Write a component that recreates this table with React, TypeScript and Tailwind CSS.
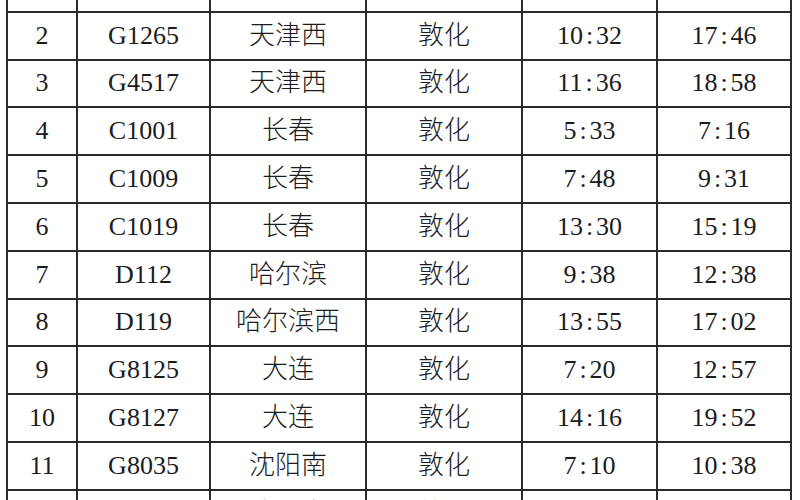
type Row = {
  no: string;
  train: string;
  from: string;
  to: string;
  depart: string;
  arrive: string;
};

const rows: Row[] = [
  { no: "1", train: "G1249", from: "北京朝阳", to: "敦化", depart: "8:05", arrive: "17:10" },
  { no: "2", train: "G1265", from: "天津西", to: "敦化", depart: "10:32", arrive: "17:46" },
  { no: "3", train: "G4517", from: "天津西", to: "敦化", depart: "11:36", arrive: "18:58" },
  { no: "4", train: "C1001", from: "长春", to: "敦化", depart: "5:33", arrive: "7:16" },
  { no: "5", train: "C1009", from: "长春", to: "敦化", depart: "7:48", arrive: "9:31" },
  { no: "6", train: "C1019", from: "长春", to: "敦化", depart: "13:30", arrive: "15:19" },
  { no: "7", train: "D112", from: "哈尔滨", to: "敦化", depart: "9:38", arrive: "12:38" },
  { no: "8", train: "D119", from: "哈尔滨西", to: "敦化", depart: "13:55", arrive: "17:02" },
  { no: "9", train: "G8125", from: "大连", to: "敦化", depart: "7:20", arrive: "12:57" },
  { no: "10", train: "G8127", from: "大连", to: "敦化", depart: "14:16", arrive: "19:52" },
  { no: "11", train: "G8035", from: "沈阳南", to: "敦化", depart: "7:10", arrive: "10:38" },
  { no: "12", train: "G8037", from: "沈阳南", to: "敦化", depart: "9:40", arrive: "13:05" },
];

function Cell({ children }: { children: React.ReactNode }) {
  return (
    <div className="flex items-center justify-center bg-white text-[26px] leading-none text-[#1c1c1c]">
      {children}
    </div>
  );
}

function Time({ value }: { value: string }) {
  const [h, m] = value.split(":");
  return (
    <span>
      {h}
      <span className="mx-[3px]">:</span>
      {m}
    </span>
  );
}

export default function App() {
  return (
    <div
      className="h-[500px] w-[800px] overflow-hidden bg-white font-light"
      style={{ fontFamily: '"Liberation Serif", "Noto Sans CJK SC", serif' }}
    >
      <div className="ml-[6px] mt-[-35px] grid w-[786px] grid-cols-[68px_131px_154px_154px_133px_132px] auto-rows-[45.8px] gap-[2px] bg-[#2b2b2b] px-[2px] pb-[2px]">
        {rows.map((r) => (
          <div key={r.no} className="contents">
            <Cell>{r.no}</Cell>
            <Cell>{r.train}</Cell>
            <Cell>{r.from}</Cell>
            <Cell>{r.to}</Cell>
            <Cell>
              <Time value={r.depart} />
            </Cell>
            <Cell>
              <Time value={r.arrive} />
            </Cell>
          </div>
        ))}
      </div>
    </div>
  );
}
